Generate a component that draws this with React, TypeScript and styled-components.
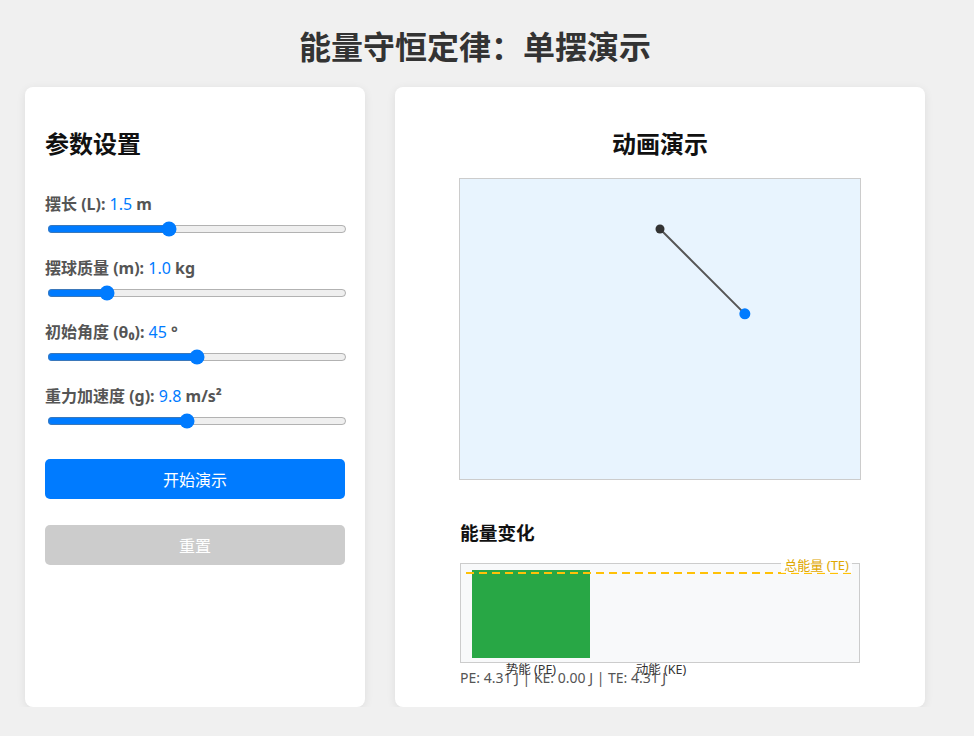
import React, { useEffect, useRef, useState } from 'react';
import styled, { createGlobalStyle } from 'styled-components';

const GlobalStyle = createGlobalStyle`
  html, body {
    margin: 0;
    padding: 0;
    background: #f0f0f0;
    font-family: 'Noto Sans', 'Noto Sans CJK SC', sans-serif;
  }
`;

const SCALE = 80; // px per meter
const PIVOT_X = 200;
const PIVOT_Y = 50;
const BAR_MAX = 88; // 차트 안쪽 높이의 90%

export default function App() {
  const [length, setLength] = useState<number>(1.5);
  const [mass, setMass] = useState<number>(1.0);
  const [angle0, setAngle0] = useState<number>(45);
  const [gravity, setGravity] = useState<number>(9.8);
  const [running, setRunning] = useState<boolean>(false);
  const [theta, setTheta] = useState<number>((45 * Math.PI) / 180);

  const frameRef = useRef<number>(0);
  const state = useRef({ theta: (45 * Math.PI) / 180, omega: 0 });

  // 파라미터 바뀌면 초기 각도로
  useEffect(() => {
    if (!running) {
      const t = (angle0 * Math.PI) / 180;
      state.current = { theta: t, omega: 0 };
      setTheta(t);
    }
  }, [angle0, running]);

  useEffect(() => {
    if (!running) return;
    let last = performance.now();
    const step = (now: number) => {
      const dt = Math.min((now - last) / 1000, 0.03);
      last = now;
      const s = state.current;
      const alpha = -(gravity / length) * Math.sin(s.theta);
      s.omega += alpha * dt;
      s.theta += s.omega * dt;
      setTheta(s.theta);
      frameRef.current = requestAnimationFrame(step);
    };
    frameRef.current = requestAnimationFrame(step);
    return () => cancelAnimationFrame(frameRef.current);
  }, [running, gravity, length]);

  const theta0 = (angle0 * Math.PI) / 180;
  const te = mass * gravity * length * (1 - Math.cos(theta0));
  const pe = mass * gravity * length * (1 - Math.cos(theta));
  const ke = Math.max(te - pe, 0);
  const peRatio = te > 0 ? pe / te : 0;
  const keRatio = te > 0 ? ke / te : 0;

  const bobX = PIVOT_X + length * SCALE * Math.sin(theta);
  const bobY = PIVOT_Y + length * SCALE * Math.cos(theta);

  const handleReset = () => {
    setRunning(false);
    const t = (angle0 * Math.PI) / 180;
    state.current = { theta: t, omega: 0 };
    setTheta(t);
  };

  return (
    <>
      <GlobalStyle />
      <Page>
        <Title>能量守恒定律：单摆演示</Title>
        <Columns>
          <ControlsPanel>
            <PanelHeading>参数设置</PanelHeading>
            <Controls>
              <ControlGroup>
                <Label>
                  摆长 (L): <Value>{length.toFixed(1)}</Value> m
                </Label>
                <Slider
                  type="range"
                  min={0.5}
                  max={3}
                  step={0.1}
                  value={length}
                  disabled={running}
                  onChange={e => setLength(parseFloat(e.target.value))}
                />
              </ControlGroup>
              <ControlGroup>
                <Label>
                  摆球质量 (m): <Value>{mass.toFixed(1)}</Value> kg
                </Label>
                <Slider
                  type="range"
                  min={0.1}
                  max={5}
                  step={0.1}
                  value={mass}
                  disabled={running}
                  onChange={e => setMass(parseFloat(e.target.value))}
                />
              </ControlGroup>
              <ControlGroup>
                <Label>
                  初始角度 (θ₀): <Value>{angle0}</Value> °
                </Label>
                <Slider
                  type="range"
                  min={0}
                  max={90}
                  step={1}
                  value={angle0}
                  disabled={running}
                  onChange={e => setAngle0(parseInt(e.target.value, 10))}
                />
              </ControlGroup>
              <ControlGroup>
                <Label>
                  重力加速度 (g): <Value>{gravity.toFixed(1)}</Value> m/s²
                </Label>
                <Slider
                  type="range"
                  min={1}
                  max={20}
                  step={0.1}
                  value={gravity}
                  disabled={running}
                  onChange={e => setGravity(parseFloat(e.target.value))}
                />
              </ControlGroup>
            </Controls>
            <ButtonStack>
              <ActionButton variant="primary" onClick={() => setRunning(!running)}>
                {running ? '暂停演示' : '开始演示'}
              </ActionButton>
              <ActionButton variant="muted" onClick={handleReset}>
                重置
              </ActionButton>
            </ButtonStack>
          </ControlsPanel>

          <StagePanel>
            <PanelHeading centered>动画演示</PanelHeading>
            <Canvas>
              <svg width="400" height="300" viewBox="0 0 400 300">
                <line
                  x1={PIVOT_X}
                  y1={PIVOT_Y}
                  x2={bobX}
                  y2={bobY}
                  stroke="#555"
                  strokeWidth="2"
                />
                <circle cx={PIVOT_X} cy={PIVOT_Y} r="4.5" fill="#333" />
                <circle cx={bobX} cy={bobY} r="5.5" fill="#007bff" />
              </svg>
            </Canvas>

            <EnergySection>
              <EnergyHeading>能量变化</EnergyHeading>
              <Chart>
                <TotalLine>
                  <TotalLabel>总能量 (TE)</TotalLabel>
                </TotalLine>
                <Bars>
                  <BarSlot>
                    <Bar color="#28a745" style={{ height: `${peRatio * BAR_MAX}px` }} />
                    <BarLabel>势能 (PE)</BarLabel>
                  </BarSlot>
                  <BarSlot>
                    <Bar color="#007bff" style={{ height: `${keRatio * BAR_MAX}px` }} />
                    <BarLabel>动能 (KE)</BarLabel>
                  </BarSlot>
                </Bars>
              </Chart>
              <Stats>
                PE: {pe.toFixed(2)} J | KE: {ke.toFixed(2)} J | TE: {te.toFixed(2)} J
              </Stats>
            </EnergySection>
          </StagePanel>
        </Columns>
      </Page>
    </>
  );
}

/*
 ** 레이아웃
 */
const Page = styled.div`
  width: 900px;
  margin-left: 25px;
`;

const Title = styled.h1`
  margin: 25px 0 18px;
  font-size: 32px;
  line-height: 44px;
  font-weight: bold;
  color: #333;
  text-align: center;
`;

const Columns = styled.div`
  display: flex;
  gap: 30px;
  align-items: stretch;
`;

const Panel = styled.div`
  background: #fff;
  border-radius: 8px;
  box-shadow: 0 2px 10px rgba(0, 0, 0, 0.08);
  padding: 20px;
  box-sizing: border-box;
`;

const ControlsPanel = styled(Panel)`
  width: 340px;
  flex-shrink: 0;
`;

const StagePanel = styled(Panel)`
  width: 530px;
  flex-shrink: 0;
`;

const PanelHeading = styled.h2<{ centered?: boolean }>`
  margin: 20px 0 17px;
  font-size: 24px;
  line-height: 34px;
  font-weight: bold;
  color: #111;
  text-align: ${props => (props.centered ? 'center' : 'left')};
`;

/*
 ** 파라미터
 */
const Controls = styled.div`
  padding-top: 15px;
`;

const ControlGroup = styled.div`
  margin-bottom: 20px;
`;

const Label = styled.label`
  display: block;
  margin-bottom: 6px;
  font-size: 16px;
  line-height: 22px;
  font-weight: bold;
  color: #555;
`;

const Value = styled.span`
  font-weight: normal;
  color: #007bff;
`;

const Slider = styled.input`
  display: block;
  width: 100%;
  height: 16px;
  margin: 2px 0 2px 2px;
  accent-color: #007bff;
  cursor: pointer;
`;

const ButtonStack = styled.div`
  display: flex;
  flex-direction: column;
  gap: 26px;
  padding-top: 10px;
`;

const ActionButton = styled.button<{ variant: 'primary' | 'muted' }>`
  width: 100%;
  height: 40px;
  border: none;
  border-radius: 5px;
  font-family: 'Noto Sans', 'Noto Sans CJK SC', sans-serif;
  font-size: 16px;
  color: #fff;
  background: ${props => (props.variant === 'primary' ? '#007bff' : '#ccc')};
  cursor: pointer;
`;

/*
 ** 애니메이션
 */
const Canvas = styled.div`
  width: 400px;
  height: 300px;
  margin: 0 auto;
  border: 1px solid #ccc;
  background: #e8f4fe;
  > svg {
    display: block;
  }
`;

const EnergySection = styled.div`
  width: 400px;
  margin: 40px auto 0;
`;

const EnergyHeading = styled.h3`
  margin: 20px 0 17px;
  font-size: 18.72px;
  line-height: 26px;
  font-weight: bold;
  color: #111;
`;

const Chart = styled.div`
  position: relative;
  height: 100px;
  box-sizing: border-box;
  border: 1px solid #ccc;
  background: #f8f9fa;
`;

const Bars = styled.div`
  display: flex;
  align-items: flex-end;
  gap: 12px;
  height: 100%;
  box-sizing: border-box;
  padding: 0 0 4px 11px;
`;

const BarSlot = styled.div`
  position: relative;
  width: 118px;
  height: 100%;
  display: flex;
  align-items: flex-end;
`;

const Bar = styled.div<{ color: string }>`
  width: 100%;
  background: ${props => props.color};
`;

const BarLabel = styled.span`
  position: absolute;
  left: 0;
  right: 0;
  bottom: -20px;
  font-size: 12.5px;
  line-height: 16px;
  color: #333;
  text-align: center;
  white-space: nowrap;
`;

const TotalLine = styled.div`
  position: absolute;
  left: 5px;
  right: 5px;
  top: 8px;
  height: 2px;
  background: repeating-linear-gradient(
    90deg,
    #ffc107 0 8px,
    transparent 8px 13px
  );
  z-index: 1;
`;

const TotalLabel = styled.span`
  position: absolute;
  right: 2px;
  top: -15px;
  padding: 0 3px;
  font-size: 13px;
  line-height: 16px;
  color: #e0a800;
  background: rgba(255, 255, 255, 0.85);
`;

const Stats = styled.div`
  margin-top: 5px;
  font-size: 14px;
  line-height: 19px;
  color: #555;
`;
